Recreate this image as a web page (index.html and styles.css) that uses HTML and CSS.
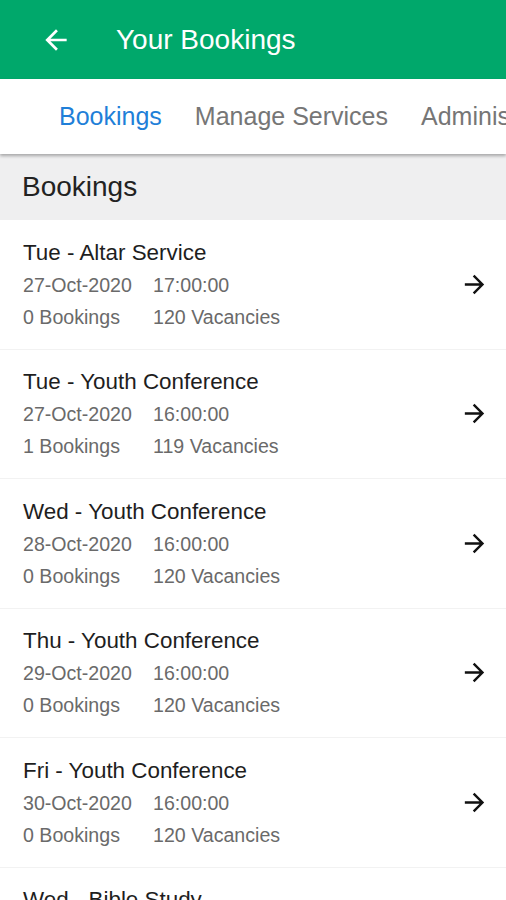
FILE: index.html
```html
<!DOCTYPE html>
<html lang="en">
<head>
    <meta charset="UTF-8">
    <meta name="viewport" content="width=device-width, initial-scale=1.0">
    <title>Your Bookings</title>
    <link rel="stylesheet" href="styles.css">
</head>
<body>
    <header class="appbar">
        <svg class="back" viewBox="0 0 24 24" width="32" height="32">
            <path d="M20 11H7.83l5.59-5.59L12 4l-8 8 8 8 1.41-1.41L7.83 13H20v-2z" fill="#fff"/>
        </svg>
        <h1 class="title">Your Bookings</h1>
    </header>

    <nav class="tabs">
        <span class="tab active">Bookings</span>
        <span class="tab">Manage Services</span>
        <span class="tab">Administrators</span>
    </nav>

    <div class="section">Bookings</div>

    <ul class="list">
        <li class="row">
            <div class="info">
                <div class="name">Tue - Altar Service</div>
                <div class="meta"><span class="col">27-Oct-2020</span><span>17:00:00</span></div>
                <div class="meta"><span class="col">0 Bookings</span><span>120 Vacancies</span></div>
            </div>
            <svg class="go" viewBox="0 0 24 24" width="29" height="29"><path d="M12 4l-1.41 1.41L16.17 11H4v2h12.17l-5.58 5.59L12 20l8-8z"/></svg>
        </li>
        <li class="row">
            <div class="info">
                <div class="name">Tue - Youth Conference</div>
                <div class="meta"><span class="col">27-Oct-2020</span><span>16:00:00</span></div>
                <div class="meta"><span class="col">1 Bookings</span><span>119 Vacancies</span></div>
            </div>
            <svg class="go" viewBox="0 0 24 24" width="29" height="29"><path d="M12 4l-1.41 1.41L16.17 11H4v2h12.17l-5.58 5.59L12 20l8-8z"/></svg>
        </li>
        <li class="row">
            <div class="info">
                <div class="name">Wed - Youth Conference</div>
                <div class="meta"><span class="col">28-Oct-2020</span><span>16:00:00</span></div>
                <div class="meta"><span class="col">0 Bookings</span><span>120 Vacancies</span></div>
            </div>
            <svg class="go" viewBox="0 0 24 24" width="29" height="29"><path d="M12 4l-1.41 1.41L16.17 11H4v2h12.17l-5.58 5.59L12 20l8-8z"/></svg>
        </li>
        <li class="row">
            <div class="info">
                <div class="name">Thu - Youth Conference</div>
                <div class="meta"><span class="col">29-Oct-2020</span><span>16:00:00</span></div>
                <div class="meta"><span class="col">0 Bookings</span><span>120 Vacancies</span></div>
            </div>
            <svg class="go" viewBox="0 0 24 24" width="29" height="29"><path d="M12 4l-1.41 1.41L16.17 11H4v2h12.17l-5.58 5.59L12 20l8-8z"/></svg>
        </li>
        <li class="row">
            <div class="info">
                <div class="name">Fri - Youth Conference</div>
                <div class="meta"><span class="col">30-Oct-2020</span><span>16:00:00</span></div>
                <div class="meta"><span class="col">0 Bookings</span><span>120 Vacancies</span></div>
            </div>
            <svg class="go" viewBox="0 0 24 24" width="29" height="29"><path d="M12 4l-1.41 1.41L16.17 11H4v2h12.17l-5.58 5.59L12 20l8-8z"/></svg>
        </li>
        <li class="row">
            <div class="info">
                <div class="name">Wed - Bible Study</div>
                <div class="meta"><span class="col">04-Nov-2020</span><span>19:00:00</span></div>
                <div class="meta"><span class="col">0 Bookings</span><span>120 Vacancies</span></div>
            </div>
            <svg class="go" viewBox="0 0 24 24" width="29" height="29"><path d="M12 4l-1.41 1.41L16.17 11H4v2h12.17l-5.58 5.59L12 20l8-8z"/></svg>
        </li>
    </ul>
</body>
</html>
```

FILE: styles.css
```css
* {
    margin: 0;
    padding: 0;
    box-sizing: border-box;
}
body {
    font-family: 'Liberation Sans', Arial, sans-serif;
    background: #fff;
    width: 506px;
    height: 900px;
    overflow: hidden;
}

/* App bar */
.appbar {
    height: 79px;
    background: #00a86b;
    display: flex;
    align-items: center;
    padding-left: 40px;
}
.back {
    display: block;
}
.title {
    font-weight: normal;
    font-size: 28px;
    color: #fff;
    margin-left: 44px;
}

/* Tabs */
.tabs {
    height: 75px;
    display: flex;
    align-items: center;
    padding-left: 59px;
    gap: 33px;
    white-space: nowrap;
    overflow: hidden;
    box-shadow: 0 2px 3px rgba(0, 0, 0, 0.3);
    position: relative;
    background: #fff;
}
.tab {
    font-size: 25px;
    color: #767676;
}
.tab.active {
    color: #1f7fd8;
}

/* Section header */
.section {
    height: 66px;
    background: #efeff0;
    display: flex;
    align-items: center;
    padding-left: 22px;
    font-size: 28px;
    color: #222;
}

/* List rows */
.list {
    list-style: none;
}
.row {
    height: 129.5px;
    display: flex;
    align-items: center;
    padding: 0 17px 0 23px;
    border-bottom: 1px solid #f2f2f2;
}
.info {
    flex: 1;
    padding-top: 4px;
}
.name {
    font-size: 22.4px;
    color: #1e1e1e;
    margin-bottom: 3px;
}
.meta {
    font-size: 19.6px;
    color: #6a6a6a;
    line-height: 32px;
}
.col {
    display: inline-block;
    width: 130px;
}
.go {
    display: block;
    fill: #111;
}
```
